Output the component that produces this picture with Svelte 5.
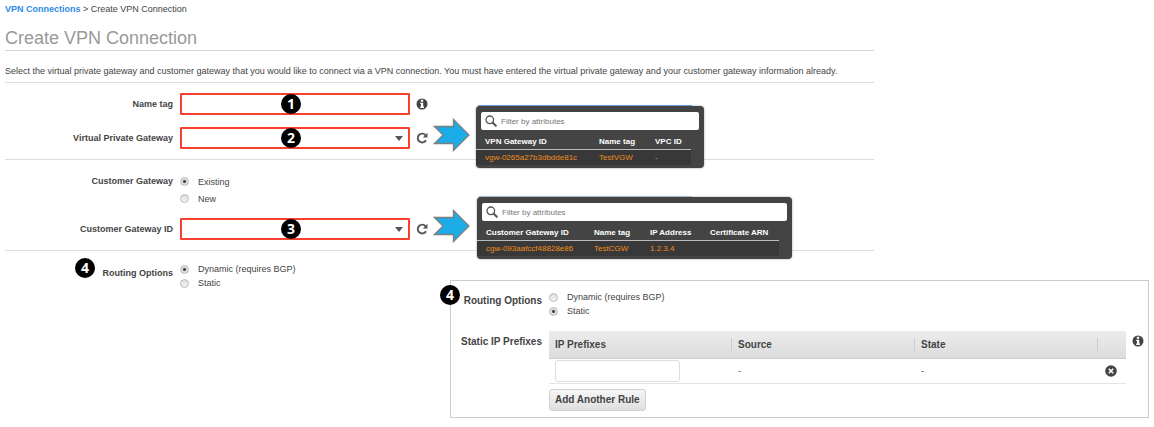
<script lang="ts">
  type Column = { title: string, value: string };

  const vpnGateways: Column[] = [
    { title: 'VPN Gateway ID', value: 'vgw-0265a27b3dbdde81c' },
    { title: 'Name tag', value: 'TestVGW' },
    { title: 'VPC ID', value: '-' }
  ];
  const customerGateways: Column[] = [
    { title: 'Customer Gateway ID', value: 'cgw-093aafccf48828e86' },
    { title: 'Name tag', value: 'TestCGW' },
    { title: 'IP Address', value: '1.2.3.4' },
    { title: 'Certificate ARN', value: '' }
  ];

  let nameTag = '';
  let gatewayType = 'existing';
  let routing = 'dynamic';
  let staticRouting = 'static';
  let rules = [''];

  function addRule() {
    rules = [...rules, ''];
  }

  function removeRule(index: number) {
    rules = rules.filter((_, i) => i !== index);
  }
</script>

{#snippet infoIcon()}
  <svg class="icon" viewBox="0 0 12 12" role="img" aria-label="Info">
    <circle cx="6" cy="6" r="5.5" fill="#444" />
    <path d="M4.800 1.800h2.400v2H4.800zM4.200 4.700h3v3.800H8v1.400H4.200V8.500h.8V6h-.8z" fill="#fff" />
  </svg>
{/snippet}

{#snippet refreshButton(label)}
  <button type="button" class="icon-btn" aria-label={label}>
    <svg class="icon" viewBox="0 0 12 12">
      <path d="M9.600 3.300A4.400 4.400 0 1 0 10 8.200" fill="none" stroke="#555" stroke-width="1.900" />
      <path d="M11.500.8v4.600H6.900z" fill="#555" />
    </svg>
  </button>
{/snippet}

{#snippet arrow()}
  <svg class="arrow" viewBox="0 0 38 34" aria-hidden="true">
    <path d="M1.500 8.500h19V1.500L36 17 20.500 32.500v-7h-19L10 17z" fill="#1cade8" stroke="#7d7d7d" stroke-width="1.300" />
  </svg>
{/snippet}

{#snippet popup(columns, kind)}
  <div class="popup {kind}">
    <div class="search">
      <svg viewBox="0 0 12 12" aria-hidden="true">
        <circle cx="4.800" cy="4.800" r="3.800" fill="none" stroke="#555" stroke-width="1.300" />
        <path d="M7.800 7.800l3 3" stroke="#555" stroke-width="2" stroke-linecap="round" />
      </svg>
      <input type="text" placeholder="Filter by attributes" aria-label="Filter by attributes" />
    </div>
    <table>
      <thead>
        <tr>
          {#each columns as column}
            <th>{column.title}</th>
          {/each}
        </tr>
      </thead>
      <tbody>
        <tr>
          {#each columns as column}
            <td>{column.value}</td>
          {/each}
        </tr>
      </tbody>
    </table>
  </div>
{/snippet}

<div class="page">
  <header>
    <nav><a href="#connections">VPN Connections</a> &gt; Create VPN Connection</nav>
    <h1>Create VPN Connection</h1>
    <p>Select the virtual private gateway and customer gateway that you would like to connect via a VPN connection. You must have entered the virtual private gateway and your customer gateway information already.</p>
  </header>

  <section>
    <div class="row">
      <label class="name" for="name-tag">Name tag</label>
      <div class="field">
        <input id="name-tag" type="text" bind:value={nameTag} />
        <span class="badge">1</span>
      </div>
      {@render infoIcon()}
    </div>
    <div class="row">
      <label class="name" for="vgw">Virtual Private Gateway</label>
      <div class="field">
        <select id="vgw"><option></option></select>
        <svg class="caret" viewBox="0 0 8 5" aria-hidden="true"><path d="M0 0h8L4 5z" fill="#555" /></svg>
        <span class="badge">2</span>
      </div>
      {@render refreshButton('Refresh virtual private gateways')}
      {@render arrow()}
      {@render popup(vpnGateways, 'vpn')}
    </div>
  </section>

  <section>
    <div class="row" role="radiogroup" aria-labelledby="cgw-type">
      <span class="name top" id="cgw-type">Customer Gateway</span>
      <div class="radios roomy">
        <label><input type="radio" value="existing" bind:group={gatewayType} />Existing</label>
        <label><input type="radio" value="new" bind:group={gatewayType} />New</label>
      </div>
    </div>
    <div class="row">
      <label class="name" for="cgw">Customer Gateway ID</label>
      <div class="field">
        <select id="cgw"><option></option></select>
        <svg class="caret" viewBox="0 0 8 5" aria-hidden="true"><path d="M0 0h8L4 5z" fill="#555" /></svg>
        <span class="badge">3</span>
      </div>
      {@render refreshButton('Refresh customer gateways')}
      {@render arrow()}
      {@render popup(customerGateways, 'customer')}
    </div>
  </section>

  <div class="routing">
    <div class="row dynamic" role="radiogroup" aria-labelledby="routing">
      <span class="name offset" id="routing">Routing Options</span>
      <div class="radios">
        <label><input type="radio" value="dynamic" bind:group={routing} />Dynamic (requires BGP)</label>
        <label><input type="radio" value="static" bind:group={routing} />Static</label>
      </div>
      <span class="badge side">4</span>
    </div>

    <div class="panel">
      <span class="badge corner">4</span>
      <div class="row" role="radiogroup" aria-labelledby="static-routing">
        <span class="name offset" id="static-routing">Routing Options</span>
        <div class="radios">
          <label><input type="radio" value="dynamic" bind:group={staticRouting} />Dynamic (requires BGP)</label>
          <label><input type="radio" value="static" bind:group={staticRouting} />Static</label>
        </div>
      </div>
      <div class="row prefixes">
        <span class="name offset" id="prefixes">Static IP Prefixes</span>
        <div class="rules">
          <table aria-labelledby="prefixes">
            <thead>
              <tr><th>IP Prefixes</th><th>Source</th><th>State</th><th class="action"></th></tr>
            </thead>
            <tbody>
              {#each rules as rule, i}
                <tr>
                  <td><input type="text" aria-label="IP prefix" bind:value={rules[i]} /></td>
                  <td>-</td>
                  <td>-</td>
                  <td class="action">
                    <button type="button" class="icon-btn" aria-label="Remove rule" on:click={() => removeRule(i)}>
                      <svg class="icon" viewBox="0 0 12 12">
                        <circle cx="6" cy="6" r="5.800" fill="#444" />
                        <path d="M3.800 3.800l4.400 4.400M8.200 3.800L3.800 8.200" stroke="#fff" stroke-width="1.600" />
                      </svg>
                    </button>
                  </td>
                </tr>
              {/each}
            </tbody>
          </table>
          <button type="button" class="add" on:click={addRule}>Add Another Rule</button>
        </div>
        {@render infoIcon()}
      </div>
    </div>
  </div>
</div>

<style>
  :global(body) {
    background: #fff;
  }

  .page {
    padding: 2px 5px 9px;
    color: #444;
    font: 9px/14px "Liberation Sans", Arial, sans-serif;
  }

  input,
  select,
  button {
    box-sizing: border-box;
    margin: 0;
    font: inherit;
    color: inherit;
  }

  header,
  section {
    width: 76%;
    min-width: 840px;
    box-sizing: border-box;
    border-bottom: 1px solid #ddd;
  }

  a {
    color: #2e8ae6;
    font-weight: bold;
    text-decoration: none;
  }

  h1 {
    margin: 12px 0 0;
    padding-bottom: 2px;
    border-bottom: 1px solid #d4d4d4;
    color: #999;
    font-size: 18px;
    line-height: 20px;
    font-weight: normal;
  }

  p {
    margin: 0;
    padding: 13px 0 4px;
  }

  section {
    display: flex;
    flex-direction: column;
    gap: 12px;
    padding: 10px 0;
  }

  section + section {
    gap: 11px;
  }

  .row {
    position: relative;
    display: flex;
    align-items: center;
  }

  .name {
    flex: none;
    width: 168px;
    margin-right: 7px;
    font-weight: bold;
    text-align: right;
  }

  .name.top {
    align-self: flex-start;
    line-height: 17px;
  }

  .name.offset {
    align-self: flex-start;
    margin-top: 4px;
  }

  .field {
    position: relative;
    flex: none;
    width: 230px;
    margin-right: 6px;
  }

  .field input,
  .field select {
    display: block;
    width: 100%;
    height: 22px;
    padding: 0 6px;
    border: 2px solid #f9402f;
    border-radius: 1px;
    background: #fff;
    appearance: none;
  }

  .caret {
    position: absolute;
    top: 9px;
    right: 7px;
    width: 8px;
    height: 5px;
    pointer-events: none;
  }

  .badge {
    position: absolute;
    top: 1px;
    left: 101px;
    width: 20px;
    height: 20px;
    border-radius: 50%;
    background: #000;
    color: #fff;
    font: bold 14px/20px "Open Sans", "Noto Sans", sans-serif;
    text-align: center;
    pointer-events: none;
  }

  .badge.side {
    top: -4px;
    left: 70px;
  }

  .badge.corner {
    top: 4px;
    left: -11px;
  }

  .icon {
    display: block;
    flex: none;
    width: 12px;
    height: 12px;
  }

  .icon-btn {
    padding: 0;
    border: 0;
    background: none;
  }

  .arrow {
    flex: none;
    width: 38px;
    height: 34px;
    margin: -9px 0 -3px 5px;
  }

  .popup {
    position: absolute;
    top: -21px;
    left: 471px;
    z-index: 1;
    box-sizing: border-box;
    padding: 6px 5px 3px 0;
    border-radius: 4px;
    background: #444;
    box-shadow: 0 0 2px #888;
    color: #fff;
    font-size: 8px;
    line-height: 12px;
  }

  .popup::before {
    content: '';
    position: absolute;
    top: -1px;
    left: 2px;
    right: 12px;
    height: 1px;
    background: #6a9fd4;
  }

  .popup.vpn {
    width: 228px;
  }

  .popup.customer {
    left: 472px;
    width: 315px;
  }

  .popup.customer::before {
    right: 100px;
    background: #9dbdd4;
  }

  .search {
    display: flex;
    align-items: center;
    gap: 4px;
    height: 18px;
    margin-left: 5px;
    padding-left: 4px;
    border-radius: 2px;
    background: #fff;
  }

  .search svg {
    width: 12px;
    height: 12px;
  }

  .search input {
    flex: 1;
    min-width: 0;
    height: 18px;
    padding: 0;
    border: 0;
    background: none;
    color: #444;
  }

  .search input::placeholder {
    color: #777;
    opacity: 1;
  }

  table {
    border-collapse: collapse;
    table-layout: fixed;
  }

  th,
  td {
    padding: 0;
    text-align: left;
  }

  .popup table {
    width: calc(100% - 8px);
    margin-top: 5px;
  }

  .popup th {
    height: 14px;
    padding-left: 9px;
    border-bottom: 1px solid #bbb;
    white-space: nowrap;
  }

  .popup td {
    height: 15px;
    padding-left: 9px;
    background: #383838;
    color: #f08c1e;
    white-space: nowrap;
  }

  .popup th:first-child {
    width: 105px;
  }

  .popup.customer th:first-child {
    width: 99px;
  }

  .popup th:nth-child(2) {
    width: 47px;
  }

  .popup.customer th:nth-child(3) {
    width: 51px;
  }

  .radios label {
    display: flex;
    align-items: center;
    gap: 9px;
    height: 14px;
  }

  .radios.roomy label {
    height: 17px;
  }

  .radios input {
    width: 9px;
    height: 9px;
    border: 1px solid #bbb;
    border-radius: 50%;
    background: linear-gradient(#ddd, #f4f4f4);
    appearance: none;
  }

  .radios input:checked {
    background: radial-gradient(circle, #444 0 1px, #ddd 2px);
  }

  section .row[role='radiogroup'] {
    padding-top: 3px;
  }

  .routing {
    display: flex;
    align-items: flex-start;
  }

  .dynamic {
    flex: none;
    width: 445px;
    margin-top: 11px;
  }

  .panel {
    position: relative;
    flex: 1;
    margin-top: 29px;
    padding: 9px 4px 6px 0;
    border: 1px solid #ccc;
  }

  .panel .name {
    width: 91px;
    font-size: 10px;
    white-space: nowrap;
  }

  .prefixes {
    align-items: flex-start;
    margin-top: 13px;
  }

  .prefixes > :global(.icon) {
    margin: 4px 0 0 6px;
  }

  .rules {
    flex: 1;
  }

  .rules table {
    width: 100%;
  }

  .rules th {
    height: 27px;
    padding: 0 0 0 6px;
    border-bottom: 1px solid #ccc;
    background:
      linear-gradient(#ccc, #ccc) right / 1px 13px no-repeat,
      linear-gradient(#ececec, #dcdcdc);
    font-size: 10px;
  }

  .rules th.action {
    width: 21px;
    padding-left: 7px;
    background: linear-gradient(#ececec, #dcdcdc);
  }

  .rules td {
    height: 24px;
    padding-left: 6px;
    border-bottom: 1px solid #e4e4e4;
  }

  .rules td.action {
    padding-left: 7px;
  }

  .rules input {
    display: block;
    width: 125px;
    height: 22px;
    border: 1px solid #ddd;
    border-radius: 3px;
    background: #fff;
  }

  .rules td .icon-btn {
    display: block;
  }

  .add {
    height: 22px;
    margin-top: 5px;
    padding: 0 5px;
    border: 1px solid #d0d0d0;
    border-radius: 3px;
    background: linear-gradient(#f6f6f6, #dfdfdf);
    font-size: 10px;
    font-weight: bold;
  }
</style>
